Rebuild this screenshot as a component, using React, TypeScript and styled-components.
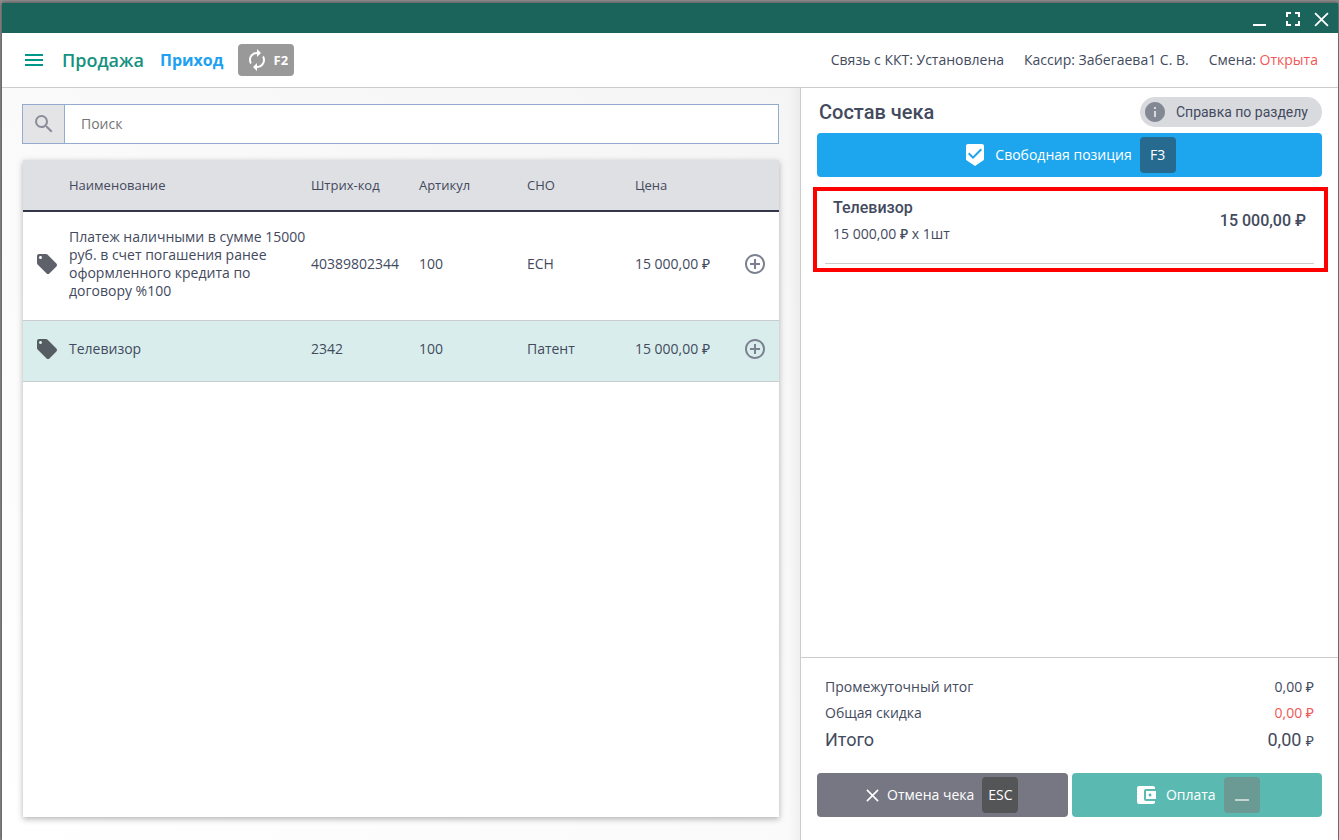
import React from "react";
import styled, { createGlobalStyle } from "styled-components";
import {
  MdMenu, MdAutorenew, MdSearch, MdLocalOffer, MdAddCircleOutline,
  MdBeenhere, MdInfo, MdAccountBalanceWallet, MdFullscreen,
} from "react-icons/md";

const ink = "#434a5e";
const line = "#cacccd";
const red = "#f25757";
const openSans = `"Open Sans", "Noto Sans", sans-serif`;
const roboto = `Roboto, "Open Sans", sans-serif`;

const GlobalStyle = createGlobalStyle`
  *, *::before, *::after { box-sizing: border-box; }
  body { margin: 0; background: #8f8f8f; color: ${ink}; font: 14px/18px ${openSans}; }
  button, input { font: inherit; color: inherit; margin: 0; }
  button { border: 0; padding: 0; background: none; cursor: pointer; }
  h1, h2, p, dl, dd, dt, ul { margin: 0; padding: 0; font-weight: 400; }
  svg { display: block; flex: none; }
`;

const Desktop = styled.div`
  min-height: 100vh;
  display: flex;
  padding: 3px 1px 0 2px;
`;
const AppWindow = styled.div`
  flex: 1;
  display: flex;
  flex-direction: column;
  background: #fff;
  box-shadow: 0 0 4px rgba(0, 0, 0, 0.6);
`;
const TitleBar = styled.div`
  height: 30px;
  flex: none;
  display: flex;
  justify-content: flex-end;
  align-items: center;
  gap: 9px;
  padding: 2px 9px 0 0;
  background: #1a645c;
  color: #fff;
`;
const WindowButton = styled.button`
  color: #fff;
`;
const Header = styled.header`
  height: 55px;
  flex: none;
  display: flex;
  align-items: center;
  padding: 0 20px;
  border-bottom: 1px solid ${line};
`;
const MenuButton = styled.button`
  color: #00968a;
  margin-right: 16px;
`;
const PageTitle = styled.h1`
  && { font-size: 18px; line-height: 24px; font-weight: 600; }
  color: #16917f;
  margin-right: 16px;
`;
const ModeLink = styled.a`
  font-size: 16px;
  line-height: 24px;
  font-weight: 700;
  color: #1da1f0;
  text-decoration: none;
  margin-right: 15px;
`;
const SwitchButton = styled.button`
  width: 56px;
  height: 32px;
  display: flex;
  align-items: center;
  justify-content: center;
  gap: 5px;
  border-radius: 4px;
  background: #999;
  && { color: #fff; font-size: 13px; font-weight: 700; }
`;
const StatusList = styled.ul`
  display: flex;
  gap: 20px;
  margin-left: auto;
  list-style: none;
`;
const Accent = styled.span`
  color: ${red};
`;
const Body = styled.div`
  flex: 1;
  display: grid;
  grid-template-columns: minmax(0, 1fr) 538px;
`;
const Catalog = styled.main`
  display: flex;
  flex-direction: column;
  gap: 16px;
  padding: 16px 21px 23px 20px;
  background: linear-gradient(to right, transparent calc(100% - 12px), rgba(0, 0, 0, 0.04)),
    linear-gradient(to top right, #fff, #f5f5f5);
`;
const SearchBox = styled.label`
  height: 40px;
  flex: none;
  display: flex;
  border: 1px solid #94abd0;
  background: #fff;
`;
const SearchIcon = styled.span`
  width: 42px;
  display: flex;
  align-items: center;
  justify-content: center;
  border-right: 1px solid #94abd0;
  background: #e4e4e7;
  color: #8a8c99;
`;
const SearchInput = styled.input`
  flex: 1;
  border: 0;
  outline: 0;
  padding: 0 16px;
  background: none;
  &::placeholder { color: #757575; opacity: 1; }
`;
const TableCard = styled.div`
  flex: 1;
  margin-left: 1px;
  background: #fff;
  box-shadow: 0 2px 6px rgba(0, 0, 0, 0.3);
`;
const Table = styled.table`
  width: 100%;
  table-layout: fixed;
  border-collapse: separate;
  border-spacing: 0;
`;
const HeadCell = styled.th<{ $width?: string }>`
  width: ${(p) => p.$width ?? "auto"};
  height: 52px;
  padding: 0;
  text-align: left;
  font-size: 13px;
  font-weight: 400;
  background: #dfe0e4;
  border-bottom: 2px solid #34364a;
`;
const Row = styled.tr<{ $selected?: boolean }>`
  background: ${(p) => (p.$selected ? "#d9eeec" : "#fff")};
  svg { color: ${(p) => (p.$selected ? "#555d63" : "#5e606a")}; }
  button svg { color: #7b8190; }
`;
const Cell = styled.td`
  padding: 16px 0 20px;
  border-bottom: 1px solid ${line};
  vertical-align: middle;
`;
const IconCell = styled(Cell)`
  padding-left: 12px;
`;
const AddCell = styled(Cell)`
  padding-right: 12px;
  button { display: block; margin-left: auto; }
`;
const Receipt = styled.aside`
  display: flex;
  flex-direction: column;
  border-left: 1px solid ${line};
  background: #fff;
`;
const ReceiptHead = styled.div`
  height: 45px;
  flex: none;
  display: flex;
  align-items: center;
  justify-content: space-between;
  padding: 2px 16px 0 18px;
`;
const ReceiptTitle = styled.h2`
  && { font: 500 20px/24px ${roboto}; }
`;
const HelpButton = styled.button`
  height: 30px;
  display: flex;
  align-items: center;
  gap: 9px;
  padding: 0 14px 0 3px;
  border-radius: 15px;
  background: #d9dade;
  && { font-family: ${roboto}; }
  svg { color: #838895; }
`;
const ActionButton = styled.button<{ $bg: string; $gap?: number }>`
  height: 44px;
  flex: 1;
  display: flex;
  align-items: center;
  justify-content: center;
  gap: ${(p) => p.$gap ?? 8}px;
  border-radius: 4px;
  background: ${(p) => p.$bg};
  && { color: #fff; }
`;
const Keycap = styled.kbd<{ $bg: string }>`
  width: 36px;
  height: 36px;
  display: flex;
  align-items: center;
  justify-content: center;
  border-radius: 4px;
  background: ${(p) => p.$bg};
  font: inherit;
`;
const FreeItem = styled.div`
  display: flex;
  padding: 0 16px;
`;
const Position = styled.div`
  height: 85px;
  display: flex;
  margin: 10px 10px 0 12px;
  padding: 0 10px 4px 8px;
  border: 4px solid #f00;
`;
const PositionBody = styled.div`
  flex: 1;
  display: flex;
  justify-content: space-between;
  padding: 7px 8px 0;
  border-bottom: 1px solid ${line};
`;
const PositionName = styled.p`
  font: 500 16px/20px ${roboto};
  margin-bottom: 7px;
`;
const PositionQty = styled.p`
  font-weight: 500;
`;
const PositionSum = styled.p`
  font: 500 16px/20px ${roboto};
  padding-top: 13px;
`;
const Totals = styled.dl`
  margin-top: auto;
  display: flex;
  flex-direction: column;
  gap: 8px;
  padding: 20px 24px 22px;
  border-top: 1px solid ${line};
`;
const TotalRow = styled.div`
  display: flex;
  justify-content: space-between;
`;
const GrandRow = styled(TotalRow)`
  font: 500 18px/20px ${roboto};
  small { font: 14px/20px ${openSans}; }
`;
const Footer = styled.div`
  display: flex;
  gap: 4px;
  padding: 0 16px 23px;
`;

const Cross = ({ size }: { size: number }) => (
  <svg width={size} height={size} viewBox="0 0 14 14" stroke="currentColor" strokeWidth="1.7" fill="none">
    <path d="M1 1L13 13M13 1L1 13" />
  </svg>
);

const products = [
  { name: "Платеж наличными в сумме 15000 руб. в счет погашения ранее оформленного кредита по договору %100", code: "40389802344", article: "100", tax: "ЕСН", price: "15 000,00 ₽" },
  { name: "Телевизор", code: "2342", article: "100", tax: "Патент", price: "15 000,00 ₽", selected: true },
];

export default function App() {
  return (
    <Desktop>
      <GlobalStyle />
      <AppWindow>
        <TitleBar>
          <WindowButton aria-label="Свернуть">
            <svg width="24" height="24" viewBox="0 0 24 24" fill="currentColor"><path d="M5 17h13v2H5z" /></svg>
          </WindowButton>
          <WindowButton aria-label="Развернуть"><MdFullscreen size={24} /></WindowButton>
          <WindowButton aria-label="Закрыть"><Cross size={15} /></WindowButton>
        </TitleBar>
        <Header>
          <MenuButton aria-label="Меню"><MdMenu size={24} /></MenuButton>
          <PageTitle>Продажа</PageTitle>
          <ModeLink href="#income">Приход</ModeLink>
          <SwitchButton><MdAutorenew size={24} />F2</SwitchButton>
          <StatusList>
            <li>Связь с ККТ: Установлена</li>
            <li>Кассир: Забегаева1 С. В.</li>
            <li>Смена: <Accent>Открыта</Accent></li>
          </StatusList>
        </Header>
        <Body>
          <Catalog>
            <SearchBox>
              <SearchIcon><MdSearch size={24} /></SearchIcon>
              <SearchInput type="text" placeholder="Поиск" aria-label="Поиск" />
            </SearchBox>
            <TableCard>
              <Table>
                <thead>
                  <tr>
                    <HeadCell $width="46px" />
                    <HeadCell $width="32%">Наименование</HeadCell>
                    <HeadCell>Штрих-код</HeadCell>
                    <HeadCell>Артикул</HeadCell>
                    <HeadCell>СНО</HeadCell>
                    <HeadCell>Цена</HeadCell>
                    <HeadCell $width="36px" />
                  </tr>
                </thead>
                <tbody>
                  {products.map((p) => (
                    <Row key={p.code} $selected={p.selected}>
                      <IconCell><MdLocalOffer size={24} /></IconCell>
                      <Cell>{p.name}</Cell>
                      <Cell>{p.code}</Cell>
                      <Cell>{p.article}</Cell>
                      <Cell>{p.tax}</Cell>
                      <Cell>{p.price}</Cell>
                      <AddCell><button aria-label="Добавить"><MdAddCircleOutline size={24} /></button></AddCell>
                    </Row>
                  ))}
                </tbody>
              </Table>
            </TableCard>
          </Catalog>
          <Receipt>
            <ReceiptHead>
              <ReceiptTitle>Состав чека</ReceiptTitle>
              <HelpButton><MdInfo size={24} />Справка по разделу</HelpButton>
            </ReceiptHead>
            <FreeItem>
              <ActionButton $bg="#1da5ed">
                <MdBeenhere size={24} />Свободная позиция<Keycap $bg="#276a90">F3</Keycap>
              </ActionButton>
            </FreeItem>
            <Position>
              <PositionBody>
                <div>
                  <PositionName>Телевизор</PositionName>
                  <PositionQty>15 000,00 ₽ x 1шт</PositionQty>
                </div>
                <PositionSum>15 000,00 ₽</PositionSum>
              </PositionBody>
            </Position>
            <Totals>
              <TotalRow><dt>Промежуточный итог</dt><dd>0,00 ₽</dd></TotalRow>
              <TotalRow><dt>Общая скидка</dt><dd><Accent>0,00 ₽</Accent></dd></TotalRow>
              <GrandRow><dt>Итого</dt><dd>0,00 <small>₽</small></dd></GrandRow>
            </Totals>
            <Footer>
              <ActionButton $bg="#767783"><Cross size={13} />Отмена чека<Keycap $bg="#545557">ESC</Keycap></ActionButton>
              <ActionButton $bg="#5abab1"><MdAccountBalanceWallet size={24} />Оплата<Keycap $bg="#6b9a95">
                <svg width="14" height="12" viewBox="0 0 14 12" fill="#c3d6d4"><path d="M0 10h14v2H0z" /></svg>
              </Keycap></ActionButton>
            </Footer>
          </Receipt>
        </Body>
      </AppWindow>
    </Desktop>
  );
}
